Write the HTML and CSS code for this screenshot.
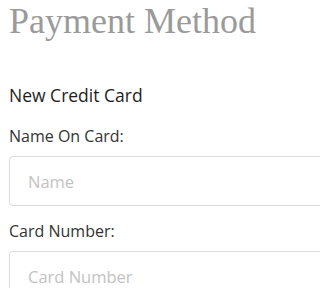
FILE: index.html
```html
<!DOCTYPE html>
<html>
<head>
<meta charset="utf-8">
<link rel="stylesheet" href="styles.css">
</head>
<body>
<div class="page">
  <h1 class="title">Payment Method</h1>
  <h2 class="section">New Credit Card</h2>
  <div class="field">
    <label class="label">Name On Card:</label>
    <div class="input"><span class="placeholder">Name</span></div>
  </div>
  <div class="field">
    <label class="label">Card Number:</label>
    <div class="input"><span class="placeholder">Card Number</span></div>
  </div>
</div>
</body>
</html>
```
FILE: styles.css
```css
html, body {
  margin: 0;
  padding: 0;
  background: #fff;
  overflow: hidden;
}
.page {
  padding: 0 0 0 9px;
  width: 320px;
  height: 288px;
  overflow: hidden;
}
.title {
  margin: 0;
  font-family: "Liberation Serif", serif;
  font-weight: normal;
  font-size: 36px;
  line-height: 42px;
  color: #9a9a9a;
}
.section {
  margin: 43px 0 21px 0;
  font-family: "Open Sans", sans-serif;
  font-weight: normal;
  font-size: 17.5px;
  line-height: 20px;
  color: #1e1e1e;
}
.field {
  display: flex;
  flex-direction: column;
}
.field + .field {
  margin-top: 15px;
}
.label {
  font-family: "Open Sans", sans-serif;
  font-size: 16px;
  line-height: 20px;
  color: #333;
}
.input {
  margin-top: 10px;
  height: 48px;
  border: 1px solid #dcdcdc;
  border-radius: 4px;
  display: flex;
  align-items: center;
  padding-left: 18px;
}
.placeholder {
  font-family: "Open Sans", sans-serif;
  font-size: 16.5px;
  color: #c2c2c2;
}
```
